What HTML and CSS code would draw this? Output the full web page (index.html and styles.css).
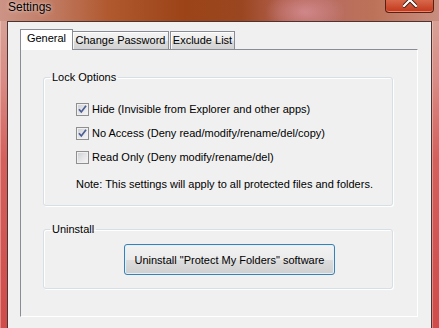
FILE: index.html
```html
<!DOCTYPE html>
<html>
<head>
    <title>Settings</title>
    <link rel="stylesheet" href="styles.css">
</head>
<body>
    <div class="window">
        <div class="titlebar">
            <span class="title">Settings</span>
            <div class="close-btn">
                <svg width="14" height="8" viewBox="0 0 14 8">
                    <path d="M1 -6 L13 6 M13 -6 L1 6" stroke="#3a1a10" stroke-width="4" stroke-linecap="square"/>
                    <path d="M1 -6 L13 6 M13 -6 L1 6" stroke="#fff" stroke-width="2.2" stroke-linecap="square"/>
                </svg>
            </div>
        </div>

        <div class="frame">
            <div class="frame-side"></div>

            <div class="client">
                <div class="tabs">
                    <div class="tab active">General</div>
                    <div class="tab tab-pass">Change Password</div>
                    <div class="tab tab-exclude">Exclude List</div>
                </div>

                <div class="tab-page">
                    <fieldset class="group lock-group">
                        <legend>Lock Options</legend>
                        <div class="options">
                            <label class="check-row">
                                <span class="box"><svg width="9" height="9" viewBox="0 0 9 9"><path d="M1 4.2 L3.3 7 L8 0.8" fill="none" stroke="#4a5d94" stroke-width="1.7"/></svg></span>
                                Hide (Invisible from Explorer and other apps)
                            </label>
                            <label class="check-row">
                                <span class="box"><svg width="9" height="9" viewBox="0 0 9 9"><path d="M1 4.2 L3.3 7 L8 0.8" fill="none" stroke="#4a5d94" stroke-width="1.7"/></svg></span>
                                No Access (Deny read/modify/rename/del/copy)
                            </label>
                            <label class="check-row">
                                <span class="box"></span>
                                Read Only (Deny modify/rename/del)
                            </label>
                            <p class="note">Note: This settings will apply to all protected files and folders.</p>
                        </div>
                    </fieldset>

                    <fieldset class="group uninstall-group">
                        <legend>Uninstall</legend>
                        <div class="uninstall-body">
                            <button class="btn">Uninstall "Protect My Folders" software</button>
                        </div>
                    </fieldset>
                </div>
            </div>

            <div class="frame-side"></div>
        </div>
    </div>
</body>
</html>
```

FILE: styles.css
```css
body {
    margin: 0;
    font-family: "Liberation Sans", Arial, sans-serif;
    font-size: 11px;
    color: #000;
    background-color: #c98a7e;
}

.window {
    width: 439px;
    height: 328px;
    overflow: hidden;
    display: flex;
    flex-direction: column;
}

.titlebar {
    height: 21px;
    flex-shrink: 0;
    display: flex;
    align-items: flex-start;
    padding-left: 8px;
    box-sizing: border-box;
    background:
        radial-gradient(ellipse 40px 22px at 305px 12px, rgba(220, 150, 160, 0.7), rgba(220, 150, 160, 0) 100%),
        linear-gradient(to right, #cc9486 0%, #c07a62 12%, #b0582e 25%, #9c4418 42%, #9a4620 55%, #b05e4c 64%, #b86c60 75%, #bc7258 85%, #c98e80 100%);
}

.title {
    font-size: 12px;
    line-height: 15px;
    color: #000;
    text-shadow: 0 0 5px rgba(255, 255, 255, 0.6), 0 0 2px rgba(255, 255, 255, 0.4);
}

.close-btn {
    margin-left: auto;
    margin-right: 5px;
    width: 49px;
    height: 13px;
    box-sizing: border-box;
    border: 1px solid #5a1e12;
    border-top: none;
    border-radius: 0 0 4px 4px;
    background: linear-gradient(#d8684a, #c2371c);
    box-shadow: inset 0 -1px 0 rgba(255, 190, 160, 0.6);
    display: flex;
    justify-content: center;
    align-items: flex-start;
}

.frame {
    flex: 1;
    display: flex;
}

.frame-side {
    width: 7px;
    flex-shrink: 0;
    background: linear-gradient(#d7a196 0%, #d98a84 20%, #d4605c 45%, #cf4c4a 100%);
    box-shadow: inset 1px 0 0 rgba(255, 220, 210, 0.4);
}

.client {
    flex: 1;
    background-color: #f0f0f0;
    border: 1px solid #4a3434;
    border-bottom: none;
    padding: 7px 0 0 12px;
}

.tabs {
    display: flex;
    align-items: flex-end;
    height: 20px;
}

.tab {
    box-sizing: border-box;
    height: 18px;
    line-height: 13px;
    padding-top: 2px;
    text-align: center;
    border: 1px solid #898c95;
    border-bottom: none;
    background: linear-gradient(#f4f4f4 0%, #ebebeb 50%, #dddddd 51%, #d2d2d2 100%);
    box-shadow: inset 1px 1px 0 rgba(255, 255, 255, 0.8);
}

.tab.active {
    position: relative;
    z-index: 1;
    width: 53px;
    height: 21px;
    margin-bottom: -1px;
    background: #fff;
    box-shadow: none;
}

.tab-pass {
    width: 97px;
    margin-left: -1px;
}

.tab-exclude {
    width: 65px;
    margin-left: 1px;
}

.tab-page {
    box-sizing: border-box;
    width: 398px;
    height: 268px;
    border-top: 1px solid #898c95;
    border-left: 1px solid #898c95;
    border-right: 1px solid #fff;
    border-bottom: 1px solid #fff;
    padding-left: 22px;
}

.group {
    box-sizing: border-box;
    width: 350px;
    margin: 0;
    padding: 0;
    border: 1px solid #d5dfe5;
    border-radius: 3px;
    box-shadow: 1px 1px 0 #fff, inset 1px 1px 0 #fff;
}

.group legend {
    margin-left: 6px;
    padding: 0 2px;
    line-height: 13px;
}

.lock-group {
    margin-top: 21px;
}

.options {
    padding: 13px 0 9px 32px;
}

.check-row {
    display: flex;
    align-items: center;
    height: 24px;
    gap: 3px;
}

.box {
    box-sizing: border-box;
    width: 13px;
    height: 13px;
    border: 1px solid #8f8f8f;
    padding: 1px;
    background-color: #f4f4f4;
    background-image: linear-gradient(135deg, #cbcdd1 0%, #e4e5e7 50%, #f6f6f6 100%);
    background-clip: content-box;
    display: flex;
    align-items: center;
    justify-content: center;
}

.note {
    margin: 3px 0 0 0;
    line-height: 24px;
}

.uninstall-group {
    margin-top: 17px;
}

.uninstall-body {
    padding: 8px 0 13px 80px;
}

.btn {
    box-sizing: border-box;
    width: 211px;
    height: 31px;
    padding: 0;
    font-family: "Liberation Sans", Arial, sans-serif;
    font-size: 11px;
    color: #000;
    border: 1px solid #3c7fb1;
    border-radius: 3px;
    background: linear-gradient(#f2f2f2 0%, #ebebeb 50%, #dddddd 51%, #cfcfcf 100%);
    box-shadow: inset 0 0 0 1px #dff2fc;
}
```
